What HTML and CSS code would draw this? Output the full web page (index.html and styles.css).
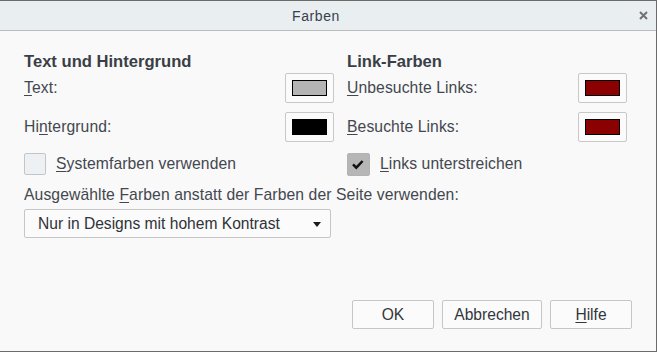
FILE: index.html
```html
<!DOCTYPE html>
<html lang="de">
<head>
<meta charset="utf-8">
<title>Farben</title>
<link rel="stylesheet" href="styles.css">
</head>
<body>
<div class="window">
  <div class="titlebar">
    <span class="title">Farben</span>
    <span class="close" aria-label="Schließen">
      <svg width="9" height="9" viewBox="0 0 9 9"><path d="M1 1 L8 8 M8 1 L1 8" stroke="#6f7173" stroke-width="2" fill="none"/></svg>
    </span>
  </div>
  <div class="content">
    <div class="columns">
      <section class="col col-left">
        <h2 class="heading">Text und Hintergrund</h2>
        <div class="row">
          <span class="label"><u>T</u>ext:</span>
          <span class="colorbtn"><span class="swatch swatch-gray"></span></span>
        </div>
        <div class="row">
          <span class="label">Hi<u>n</u>tergrund:</span>
          <span class="colorbtn"><span class="swatch swatch-black"></span></span>
        </div>
        <div class="check">
          <span class="box"></span>
          <span class="label"><u>S</u>ystemfarben verwenden</span>
        </div>
      </section>
      <section class="col col-right">
        <h2 class="heading">Link-Farben</h2>
        <div class="row">
          <span class="label"><u>U</u>nbesuchte Links:</span>
          <span class="colorbtn"><span class="swatch swatch-red"></span></span>
        </div>
        <div class="row">
          <span class="label"><u>B</u>esuchte Links:</span>
          <span class="colorbtn"><span class="swatch swatch-red"></span></span>
        </div>
        <div class="check">
          <span class="box box-checked">
            <svg width="22" height="22" viewBox="0 0 22 22"><polyline points="6,11.3 9.3,14.6 15.6,8" stroke="#111" stroke-width="2.5" fill="none"/></svg>
          </span>
          <span class="label"><u>L</u>inks unterstreichen</span>
        </div>
      </section>
    </div>
    <div class="use-label">Ausgewählte <u>F</u>arben anstatt der Farben der Seite verwenden:</div>
    <div class="select">
      <span class="select-text">Nur in Designs mit hohem Kontrast</span>
      <span class="arrow"></span>
    </div>
    <div class="buttons">
      <span class="btn btn-small">OK</span>
      <span class="btn btn-wide">Abbrechen</span>
      <span class="btn btn-small"><u>H</u>ilfe</span>
    </div>
  </div>
</div>
</body>
</html>
```

FILE: styles.css
```css
html, body {
  margin: 0;
  padding: 0;
  background: #f9f9f9;
}

body {
  font-family: "Liberation Sans", Arial, sans-serif;
  color: #43474e;
}

u {
  text-decoration: underline;
  text-underline-offset: 2px;
}

.window {
  box-sizing: border-box;
  width: 657px;
  height: 352px;
  border-top: 1px solid #6b6b6b;
  border-right: 1px solid #6b6b6b;
  border-bottom: 1px solid #6b6b6b;
  background: #f9f9f9;
  display: flex;
  flex-direction: column;
}

.titlebar {
  position: relative;
  height: 29px;
  background: #e9eef1;
  border-bottom: 1px solid #b9bdbf;
  display: flex;
  align-items: center;
  justify-content: center;
  padding-right: 24px;
}

.title {
  font-size: 14px;
  letter-spacing: 0.6px;
  color: #39404a;
  padding-top: 1px;
}

.close {
  position: absolute;
  right: 8px;
  top: 10px;
  width: 9px;
  height: 9px;
  display: flex;
}

.content {
  flex: 1;
  display: flex;
  flex-direction: column;
  padding: 21px 24px 22px 24px;
}

.columns {
  display: flex;
  gap: 13px;
}

.col {
  display: flex;
  flex-direction: column;
}

.col-left {
  width: 310px;
}

.col-right {
  width: 280px;
}

.heading {
  margin: 0;
  font-size: 16.6px;
  font-weight: bold;
  line-height: 19px;
  height: 19px;
  color: #3a3e46;
}

.row {
  display: flex;
  align-items: center;
  justify-content: space-between;
  height: 30px;
  margin-top: 2px;
}

.row + .row {
  margin-top: 9px;
}

.label {
  font-size: 15.7px;
  letter-spacing: 0.1px;
  color: #43474e;
}

.colorbtn {
  box-sizing: border-box;
  width: 49px;
  height: 30px;
  border: 1px solid #c8c8c8;
  border-radius: 2px;
  background: #fbfbfb;
  padding: 6px;
  display: flex;
}

.swatch {
  flex: 1;
  border: 1px solid #000;
}

.swatch-gray { background: #b4b4b4; }
.swatch-black { background: #000; }
.swatch-red { background: #8b0000; }

.check {
  display: flex;
  align-items: center;
  gap: 10px;
  margin-top: 11px;
  height: 22px;
}

.box {
  box-sizing: border-box;
  width: 22px;
  height: 22px;
  border: 1px solid #c3c6c8;
  border-radius: 2px;
  background: #edf1f4;
  display: flex;
}

.box-checked {
  width: 23px;
  height: 23px;
  border-color: #b3b3b3;
  background: #b6b6b6;
}

.box-checked svg {
  margin: -1px 0 0 -1px;
}

.use-label {
  margin-top: 11px;
  line-height: 18px;
  font-size: 15.7px;
  letter-spacing: 0.1px;
  color: #43474e;
}

.select {
  box-sizing: border-box;
  width: 307px;
  height: 29px;
  margin-top: 5px;
  border: 1px solid #c6c6c6;
  border-radius: 2px;
  background: #fbfbfb;
  display: flex;
  align-items: center;
  padding: 0 9px 0 13px;
}

.select-text {
  flex: 1;
  font-size: 15.6px;
  color: #2f3238;
}

.arrow {
  width: 0;
  height: 0;
  border-left: 4px solid transparent;
  border-right: 4px solid transparent;
  border-top: 5px solid #1b1b1b;
  margin-top: 1px;
}

.buttons {
  margin-top: auto;
  display: flex;
  justify-content: flex-end;
  gap: 8px;
}

.btn {
  box-sizing: border-box;
  height: 29px;
  border: 1px solid #c6c6c6;
  border-radius: 2px;
  background: #fbfbfb;
  display: flex;
  align-items: center;
  justify-content: center;
  font-size: 15.6px;
  color: #33363c;
}

.btn-small { width: 82px; }
.btn-wide { width: 100px; }
```
